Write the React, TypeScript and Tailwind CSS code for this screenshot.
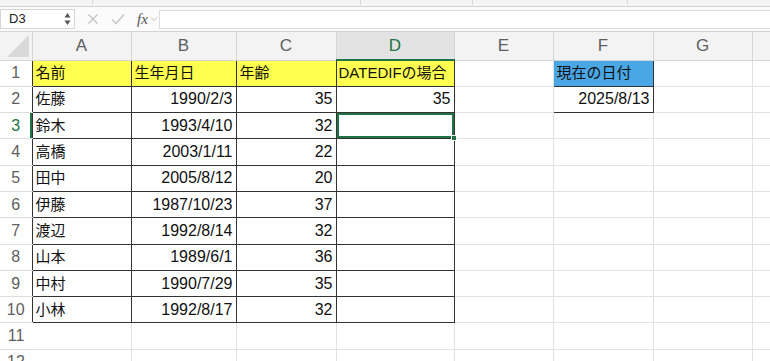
import React from 'react';

const FONT = '"Liberation Sans", "Noto Sans CJK JP", sans-serif';

const cols = [
  { key: 'A', w: 99 },
  { key: 'B', w: 105 },
  { key: 'C', w: 100 },
  { key: 'D', w: 118 },
  { key: 'E', w: 99 },
  { key: 'F', w: 100 },
  { key: 'G', w: 99 },
  { key: 'H', w: 99 }
];

const people: [string, string, number][] = [
  ['佐藤', '1990/2/3', 35],
  ['鈴木', '1993/4/10', 32],
  ['高橋', '2003/1/11', 22],
  ['田中', '2005/8/12', 20],
  ['伊藤', '1987/10/23', 37],
  ['渡辺', '1992/8/14', 32],
  ['山本', '1989/6/1', 36],
  ['中村', '1990/7/29', 35],
  ['小林', '1992/8/17', 32]
];

function FormulaBar() {
  return (
    <div className="flex h-[25px] items-center bg-[#fbfbfb] border-b border-[#d4d4d4]">
      {/* name box */}
      <div className="flex h-[20px] w-[75px] items-center justify-between border border-[#d6d6d6] bg-white pl-[8px] pr-[3px] text-[13px] text-[#222]">
        <span>D3</span>
        <svg width="7" height="14" viewBox="0 0 7 14">
          <path d="M3.5 1 L6.5 5.5 L0.5 5.5 Z" fill="#555" />
          <path d="M3.5 13 L6.5 8.5 L0.5 8.5 Z" fill="#555" />
        </svg>
      </div>
      <div className="ml-[12px] flex items-center gap-[12px]">
        <svg width="12" height="12" viewBox="0 0 12 12">
          <path d="M1.5 1.5 L10.5 10.5 M10.5 1.5 L1.5 10.5" stroke="#c4c4c4" strokeWidth="1.4" />
        </svg>
        <svg width="14" height="12" viewBox="0 0 14 12">
          <path d="M1 6.5 L5 10.5 L13 1.5" stroke="#c4c4c4" strokeWidth="1.4" fill="none" />
        </svg>
        <div className="flex items-center gap-[2px]">
          <span className="text-[15px] italic text-[#555]" style={{ fontFamily: '"Liberation Serif", serif' }}>
            fx
          </span>
          <svg width="8" height="6" viewBox="0 0 8 6">
            <path d="M1 1.5 L4 4.5 L7 1.5" stroke="#bbb" strokeWidth="1" fill="none" />
          </svg>
        </div>
      </div>
      <div className="ml-[1px] h-[19px] flex-1 border border-r-0 border-[#dcdcdc] bg-white" />
    </div>
  );
}

export default function App() {
  return (
    <div className="h-[361px] w-[770px] overflow-hidden bg-white" style={{ fontFamily: FONT }}>
      {/* top toolbar remnant */}
      <div className="relative h-[7px] border-b border-[#d2d2d2] bg-[#f4f4f4]">
        <div className="absolute left-[92px] top-0 h-[5px] w-px bg-[#dadada]" />
        <div className="absolute left-[360px] top-0 h-[5px] w-px bg-[#dadada]" />
        <div className="absolute left-[472px] top-0 h-[5px] w-px bg-[#dadada]" />
        <div className="absolute left-[627px] top-0 h-[5px] w-px bg-[#dadada]" />
      </div>
      <FormulaBar />

      <table
        className="table-fixed border-collapse whitespace-nowrap text-[16px] leading-[20px] text-[#111]"
        style={{ width: 32 + cols.reduce((s, c) => s + c.w, 0) }}
      >
        <colgroup>
          <col style={{ width: 32 }} />
          {cols.map((c) => (
            <col key={c.key} style={{ width: c.w }} />
          ))}
        </colgroup>
        <thead>
          <tr className="h-[28px] bg-[#f3f3f3]">
            <th className="relative border-r border-b border-[#d5d5d5] p-0">
              <svg className="absolute right-[3px] bottom-[3px]" width="22" height="22" viewBox="0 0 22 22">
                <path d="M22 0 L22 22 L0 22 Z" fill="#d9d9d9" />
              </svg>
            </th>
            {cols.map((c) =>
              c.key === 'D' ? (
                <th
                  key={c.key}
                  className="border-r border-b-2 border-r-[#d5d5d5] border-b-[#217346] bg-[#e3e3e3] p-0 text-[17px] font-normal text-[#217346]"
                >
                  {c.key}
                </th>
              ) : (
                <th key={c.key} className="border-r border-b border-[#d5d5d5] p-0 text-[17px] font-normal text-[#5e5e5e]">
                  {c.key}
                </th>
              )
            )}
          </tr>
        </thead>
        <tbody>
          {/* row 1 : headers */}
          <tr className="h-[26.3px]">
            <td className="border-b border-[#dcdcdc] p-0 text-center text-[16px] text-[#5e5e5e]">1</td>
            <td className="border border-[#333] bg-[#ffff4f] px-[3px] py-0 text-[15px]">名前</td>
            <td className="border border-[#333] bg-[#ffff4f] px-[3px] py-0 text-[15px]">生年月日</td>
            <td className="border border-[#333] bg-[#ffff4f] px-[3px] py-0 text-[15px]">年齢</td>
            <td className="overflow-hidden border border-[#333] bg-[#ffff4f] px-[2px] py-0 text-[15px]">DATEDIFの場合</td>
            <td className="border-r border-b border-[#e1e1e1] p-0" />
            <td className="border border-[#333] bg-[#4aa7e6] px-[3px] py-0 text-[15px]">現在の日付</td>
            <td className="border-r border-b border-[#e1e1e1] p-0" />
            <td className="border-b border-[#e1e1e1] p-0" />
          </tr>
          {people.map(([name, date, age], i) => {
            const row = i + 2;
            const sel = row === 3;
            return (
              <tr key={row} className="h-[26.3px]">
                <td
                  className={
                    sel
                      ? 'border-b border-[#dcdcdc] p-0 text-center text-[16px] text-[#217346] shadow-[inset_-2px_0_0_#217346]'
                      : 'border-b border-[#dcdcdc] p-0 text-center text-[16px] text-[#5e5e5e]'
                  }
                >
                  {row}
                </td>
                <td className="border border-[#333] px-[3px] py-0 text-[15px]">{name}</td>
                <td className="border border-[#333] px-[3px] py-0 text-right">{date}</td>
                <td className="border border-[#333] px-[3px] py-0 text-right">{age}</td>
                {sel ? (
                  <td className="relative border border-[#333] p-0 shadow-[inset_0_0_0_2px_#217346]">
                    <div className="absolute -right-[3px] -bottom-[3px] h-[6px] w-[6px] border border-white bg-[#217346]" />
                  </td>
                ) : (
                  <td className="border border-[#333] px-[3px] py-0 text-right">{row === 2 ? 35 : ''}</td>
                )}
                <td className="border-r border-b border-[#e1e1e1] p-0" />
                {row === 2 ? (
                  <td className="border border-[#333] px-[3px] py-0 text-right">2025/8/13</td>
                ) : (
                  <td className="border-r border-b border-[#e1e1e1] p-0" />
                )}
                <td className="border-r border-b border-[#e1e1e1] p-0" />
                <td className="border-b border-[#e1e1e1] p-0" />
              </tr>
            );
          })}
          {[11, 12].map((row) => (
            <tr key={row} className="h-[26.3px]">
              <td className="border-b border-[#dcdcdc] p-0 text-center text-[16px] text-[#5e5e5e]">{row}</td>
              {cols.map((c) => (
                <td key={c.key} className="border-r border-b border-[#e1e1e1] p-0" />
              ))}
            </tr>
          ))}
        </tbody>
      </table>
    </div>
  );
}
